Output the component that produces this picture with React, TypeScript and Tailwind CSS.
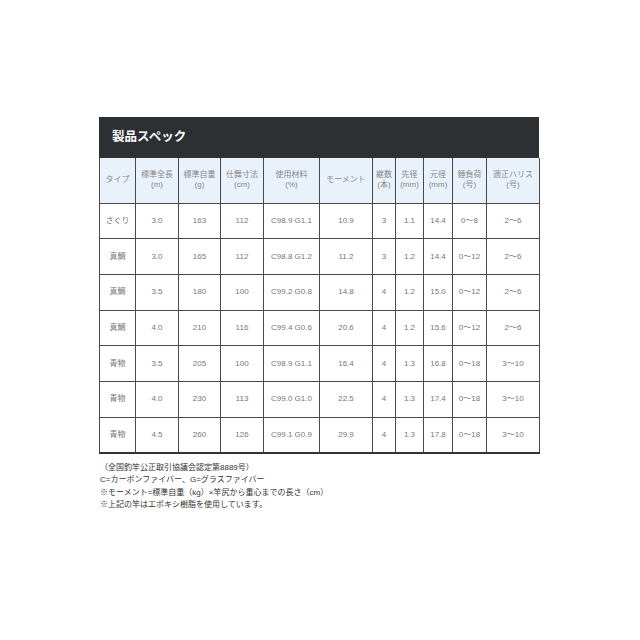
import React from "react";

const widths = [36, 43, 42, 43, 56, 53, 23, 28, 29, 34, 53];

const headers: [string, string?][] = [
  ["タイプ"],
  ["標準全長", "(m)"],
  ["標準自重", "(g)"],
  ["仕舞寸法", "(cm)"],
  ["使用材料", "(%)"],
  ["モーメント"],
  ["継数", "(本)"],
  ["先径", "(mm)"],
  ["元径", "(mm)"],
  ["錘負荷", "(号)"],
  ["適正ハリス", "(号)"],
];

const rows: string[][] = [
  ["さぐり", "3.0", "163", "112", "C98.9 G1.1", "10.9", "3", "1.1", "14.4", "0〜8", "2〜6"],
  ["真鯛", "3.0", "165", "112", "C98.8 G1.2", "11.2", "3", "1.2", "14.4", "0〜12", "2〜6"],
  ["真鯛", "3.5", "180", "100", "C99.2 G0.8", "14.8", "4", "1.2", "15.0", "0〜12", "2〜6"],
  ["真鯛", "4.0", "210", "116", "C99.4 G0.6", "20.6", "4", "1.2", "15.6", "0〜12", "2〜6"],
  ["青物", "3.5", "205", "100", "C98.9 G1.1", "16.4", "4", "1.3", "16.8", "0〜18", "3〜10"],
  ["青物", "4.0", "230", "113", "C99.0 G1.0", "22.5", "4", "1.3", "17.4", "0〜18", "3〜10"],
  ["青物", "4.5", "260", "126", "C99.1 G0.9", "29.9", "4", "1.3", "17.8", "0〜18", "3〜10"],
];

export default function App() {
  return (
    <div
      className="w-[640px] h-[640px] bg-white pt-[117px] pl-[99px]"
      style={{ fontFamily: '"Liberation Sans", "Noto Sans CJK JP", sans-serif' }}
    >
      <div className="w-[440px]">
        <div className="h-[41px] bg-[#2d3033] flex items-center pl-[13px]">
          <span className="text-white text-[12.5px] font-bold">製品スペック</span>
        </div>
        <table className="w-[440px] table-fixed border-collapse border-b-2 border-b-[#333]">
          <colgroup>
            {widths.map((w, i) => (
              <col key={i} style={{ width: w }} />
            ))}
          </colgroup>
          <thead>
            <tr className="h-[45px] bg-[#e9f1fb]">
              {headers.map(([a, b], i) => (
                <th
                  key={i}
                  className="border border-[#4a4a4a] border-t-0 font-normal text-[8px] leading-[10px] text-[#888] text-center align-middle p-0"
                >
                  <div>{a}</div>
                  {b && <div>{b}</div>}
                </th>
              ))}
            </tr>
          </thead>
          <tbody>
            {rows.map((r, ri) => (
              <tr key={ri} className="h-[35.7px]">
                {r.map((c, ci) => (
                  <td
                    key={ci}
                    className="border border-[#4a4a4a] text-[8px] text-[#777] text-center align-middle p-0 whitespace-nowrap"
                  >
                    {c}
                  </td>
                ))}
              </tr>
            ))}
          </tbody>
        </table>
        <div className="mt-[8px] text-[8px] leading-[12.5px] text-[#333] pl-[1px]">
          <div>（全国釣竿公正取引協議会認定第8889号）</div>
          <div>C=カーボンファイバー、G=グラスファイバー</div>
          <div>※モーメント=標準自重（kg）×竿尻から重心までの長さ（cm）</div>
          <div>※上記の竿はエポキシ樹脂を使用しています。</div>
        </div>
      </div>
    </div>
  );
}
